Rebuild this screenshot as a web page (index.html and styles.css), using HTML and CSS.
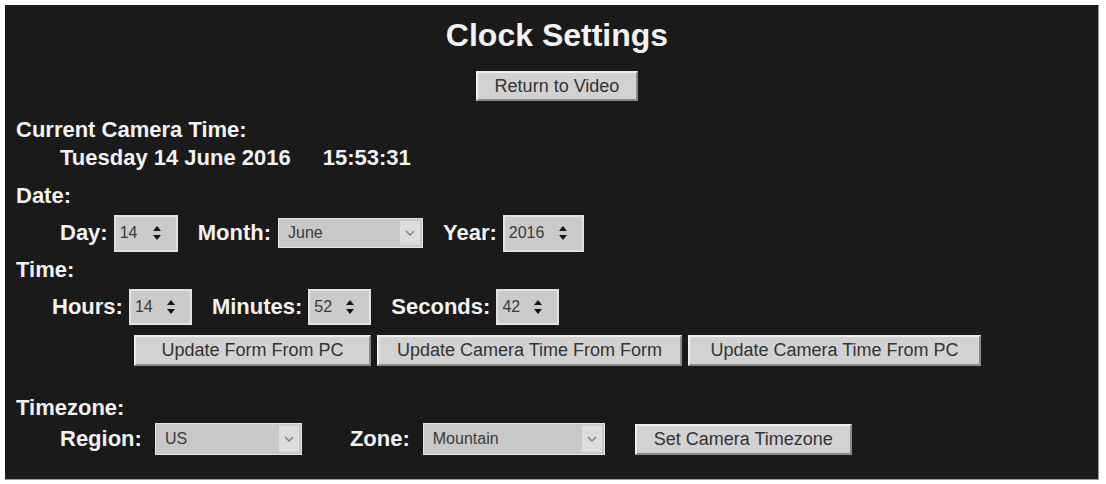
FILE: index.html
```html
<!DOCTYPE HTML>
<html>
<head>
  <title>Clock Settings</title>
  <link rel="stylesheet" href="styles.css">
</head>
<body>
  <div class="panel">
    <h1>Clock Settings</h1>
    <div class="top-bar">
      <button class="btn">Return to Video</button>
    </div>

    <div class="label label-now">Current Camera Time:</div>
    <div class="now">
      <span>Tuesday 14 June 2016</span>
      <span>15:53:31</span>
    </div>

    <!-- Data -->
    <div class="label label-date">Date:</div>
    <div class="row row-date">
      <div class="field">
        <span class="name">Day:</span>
        <div class="spin spin-day"><span>14</span>
          <svg width="8" height="16" viewBox="0 0 8 16"><polygon points="0,6 4,1 8,6"/><polygon points="0,10 8,10 4,15"/></svg>
        </div>
      </div>
      <div class="field">
        <span class="name">Month:</span>
        <div class="select select-month"><span class="value">June</span>
          <span class="chevron"><svg width="10" height="6" viewBox="0 0 10 6"><polyline points="1,1 5,5 9,1"/></svg></span>
        </div>
      </div>
      <div class="field">
        <span class="name">Year:</span>
        <div class="spin spin-year"><span>2016</span>
          <svg width="8" height="16" viewBox="0 0 8 16"><polygon points="0,6 4,1 8,6"/><polygon points="0,10 8,10 4,15"/></svg>
        </div>
      </div>
    </div>

    <!-- Ora -->
    <div class="label label-time">Time:</div>
    <div class="row row-time">
      <div class="field">
        <span class="name">Hours:</span>
        <div class="spin"><span>14</span>
          <svg width="8" height="16" viewBox="0 0 8 16"><polygon points="0,6 4,1 8,6"/><polygon points="0,10 8,10 4,15"/></svg>
        </div>
      </div>
      <div class="field">
        <span class="name">Minutes:</span>
        <div class="spin"><span>52</span>
          <svg width="8" height="16" viewBox="0 0 8 16"><polygon points="0,6 4,1 8,6"/><polygon points="0,10 8,10 4,15"/></svg>
        </div>
      </div>
      <div class="field">
        <span class="name">Seconds:</span>
        <div class="spin"><span>42</span>
          <svg width="8" height="16" viewBox="0 0 8 16"><polygon points="0,6 4,1 8,6"/><polygon points="0,10 8,10 4,15"/></svg>
        </div>
      </div>
    </div>

    <div class="buttons">
      <button class="btn btn-form">Update Form From PC</button>
      <button class="btn">Update Camera Time From Form</button>
      <button class="btn btn-pc">Update Camera Time From PC</button>
    </div>

    <!-- Fus orar -->
    <div class="label label-zone">Timezone:</div>
    <div class="row row-zone">
      <span class="name">Region:</span>
      <div class="select select-region"><span class="value">US</span>
        <span class="chevron"><svg width="10" height="6" viewBox="0 0 10 6"><polyline points="1,1 5,5 9,1"/></svg></span>
      </div>
      <span class="name name-zone">Zone:</span>
      <div class="select select-zone"><span class="value">Mountain</span>
        <span class="chevron"><svg width="10" height="6" viewBox="0 0 10 6"><polyline points="1,1 5,5 9,1"/></svg></span>
      </div>
      <button class="btn btn-set">Set Camera Timezone</button>
    </div>
  </div>
</body>
</html>
```

FILE: styles.css
```css
body {
  margin: 0;
  background-color: #ffffff;
  font-family: "Liberation Sans", Arial, sans-serif;
}

.panel {
  margin: 5px 7px 4px 5px;
  height: 475px;
  box-sizing: border-box;
  padding: 12px 0 0 11px;
  background-color: #1a1a1a;
  color: #f2f2f2;
  border-right: 1px solid #9a9a9a;
  border-bottom: 1px solid #9a9a9a;
}

h1 {
  margin: 0;
  font-size: 32px;
  line-height: 36px;
  text-align: center;
}

.top-bar {
  margin-top: 18px;
  text-align: center;
}

/* Butoane gri cu relief */
.btn {
  height: 31px;
  padding: 0 17px;
  font-family: "Liberation Sans", Arial, sans-serif;
  font-size: 18px;
  color: #333333;
  background-color: #d2d2d2;
  border: 2px solid;
  border-color: #efefef #8a8a8a #8a8a8a #efefef;
}

.top-bar .btn {
  height: 30px;
}

.label {
  font-size: 22px;
  font-weight: bold;
  line-height: 28px;
}

.label-now {
  margin-top: 15px;
}

.now {
  display: flex;
  gap: 32px;
  padding-left: 44px;
  font-size: 22px;
  font-weight: bold;
  line-height: 28px;
}

.label-date {
  margin-top: 10px;
}

.label-time {
  margin-top: 4px;
}

.row {
  display: flex;
  align-items: center;
  height: 38px;
  margin-top: 4px;
}

.row-date {
  gap: 20px;
  padding-left: 44px;
}

.row-time {
  gap: 20px;
  padding-left: 36px;
}

.field {
  display: flex;
  align-items: center;
  gap: 6px;
}

.row-date .field:nth-child(2) {
  gap: 7px;
}

.name {
  font-size: 22px;
  font-weight: bold;
}

/* Campuri numerice cu sageti */
.spin {
  display: flex;
  align-items: center;
  justify-content: space-between;
  width: 63px;
  height: 36px;
  box-sizing: border-box;
  padding: 0 15px 0 4px;
  background-color: #cbcbcb;
  border: 2px solid #e2e2e2;
  font-size: 16px;
  color: #3a3a3a;
}

.spin svg {
  fill: #151515;
}

.spin-day {
  width: 64px;
  height: 37px;
}

.spin-year {
  width: 81px;
  height: 37px;
}

/* Liste derulante */
.select {
  display: flex;
  align-items: stretch;
  height: 31px;
  box-sizing: border-box;
  background-color: #c8c8c8;
  border: 1px solid #e4e4e4;
  font-size: 16px;
  color: #3a3a3a;
}

.select .value {
  flex: 1;
  display: flex;
  align-items: center;
  padding-left: 9px;
}

.select .chevron {
  display: flex;
  align-items: center;
  justify-content: center;
  width: 20px;
  margin: 2px;
  background-color: #dcdcdc;
}

.select .chevron svg {
  fill: none;
  stroke: #7a7a7a;
  stroke-width: 1.3;
}

.select-month {
  width: 145px;
  height: 30px;
}

.buttons {
  display: flex;
  gap: 6px;
  margin-top: 9px;
  padding-left: 118px;
}

.buttons .btn {
  padding: 0 18px;
}

.buttons .btn-form {
  width: 237px;
}

.buttons .btn-pc {
  width: 293px;
}

.label-zone {
  margin-top: 28px;
}

.row-zone {
  height: 32px;
  margin-top: 1px;
  padding-left: 44px;
}

.row-zone .name {
  margin-right: 13px;
}

.row-zone .name-zone {
  margin-left: 48px;
}

.select-region {
  width: 147px;
  height: 32px;
}

.select-zone {
  width: 182px;
  height: 32px;
}

.btn-set {
  margin-left: 30px;
}
```
